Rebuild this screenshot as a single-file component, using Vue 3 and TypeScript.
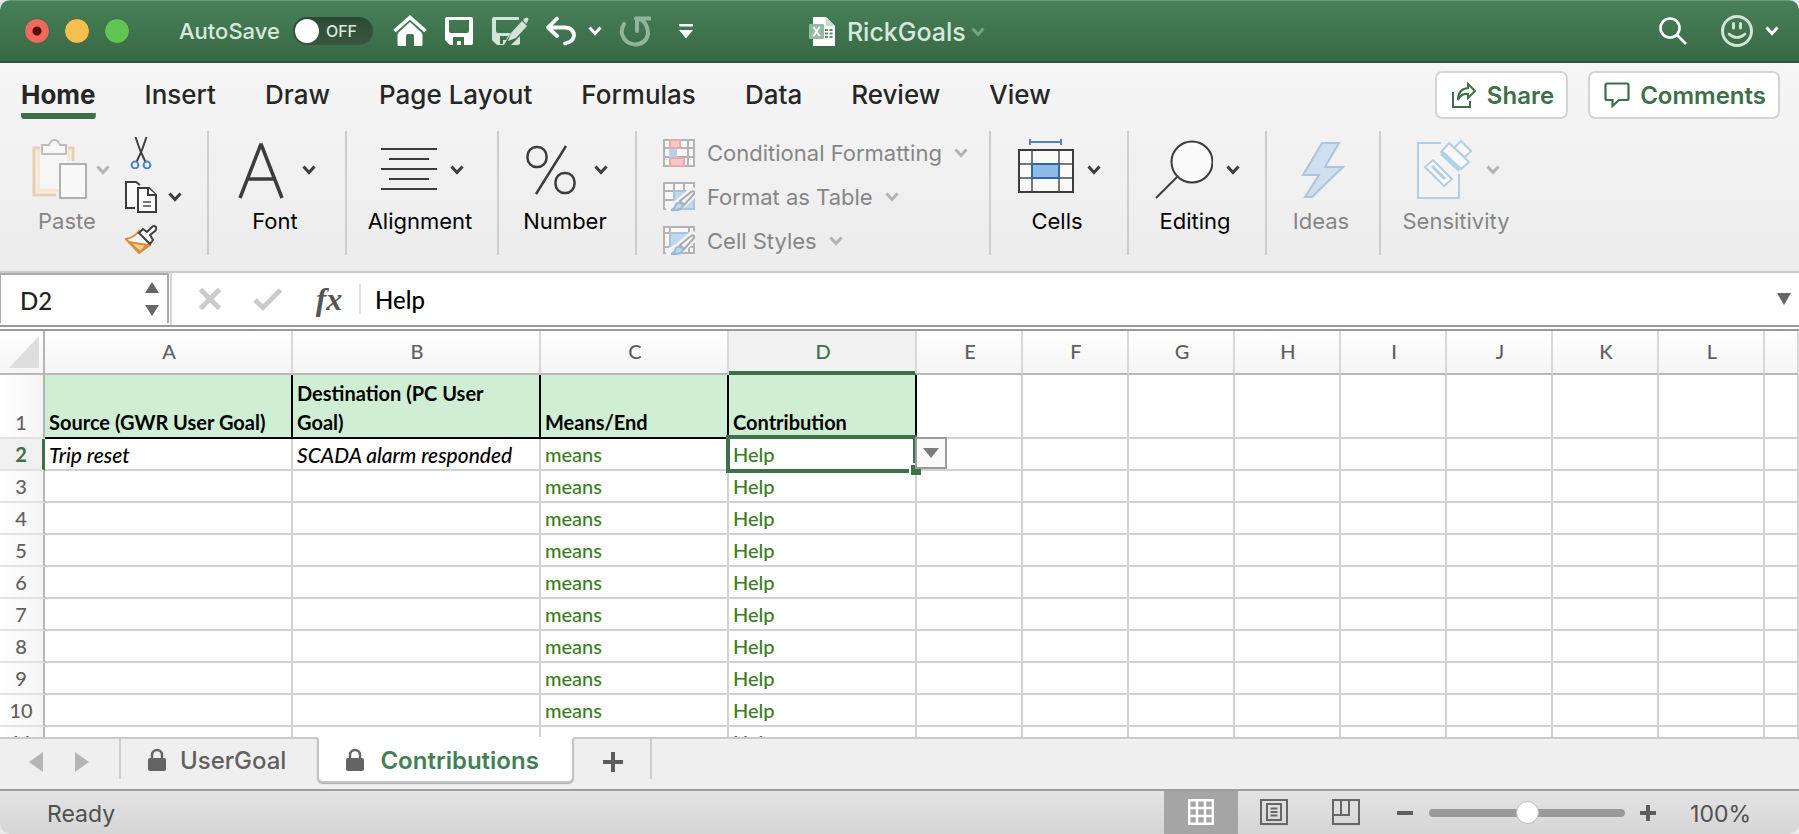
<script setup lang="ts">
import { h, ref } from 'vue'

interface Row { n: number; source?: string; destination?: string }

const autoSave = ref(false)
const cellRef = ref('D2')
const formula = ref('Help')
const zoom = ref(100)

const menus = ['Home', 'Insert', 'Draw', 'Page Layout', 'Formulas', 'Data', 'Review', 'View']
const columns = ['A', 'B', 'C', 'D', 'E', 'F', 'G', 'H', 'I', 'J', 'K', 'L', '']
const emptyColumns = columns.slice(4)
const rows: Row[] = Array.from({ length: 10 }, (_, i) => ({ n: i + 2 }))
rows[0].source = 'Trip reset'
rows[0].destination = 'SCADA alarm responded'

const Chevron = () =>
  h('svg', { width: 14, height: 10, viewBox: '0 0 14 10', fill: 'none', stroke: 'currentColor', 'stroke-width': 3, 'aria-hidden': 'true' }, [
    h('path', { d: 'M1.5 1.5 7 7.5 12.5 1.5' }),
  ])

const Lock = () =>
  h('svg', { width: 20, height: 24, viewBox: '0 0 20 24', 'aria-hidden': 'true' }, [
    h('path', { d: 'M5 11V7a5 5 0 0 1 10 0v4', fill: 'none', stroke: '#646464', 'stroke-width': 2.4 }),
    h('rect', { x: 1, y: 10, width: 18, height: 13, rx: 2, fill: '#646464' }),
  ])
</script>

<template>
  <div class="window">
    <header class="titlebar">
      <div class="lights">
        <button class="light close" aria-label="Close"></button>
        <button class="light minimise" aria-label="Minimise"></button>
        <button class="light expand" aria-label="Full screen"></button>
      </div>
      <label class="autosave">
        <span>AutoSave</span>
        <input v-model="autoSave" type="checkbox" class="sr" />
        <span class="toggle"><span class="knob"></span><span>OFF</span></span>
      </label>
      <div class="quick">
        <button aria-label="Home">
          <svg width="34" height="32" viewBox="0 0 34 32"><path d="M17 5.500 29.500 18V29.500Q29.500 31 28 31H21V21Q21 19 19 19H15Q13 19 13 21V31H6Q4.500 31 4.500 29.500V18Z" fill="#fff" /><path d="M1.500 16.500 17 2 32.500 16.500" fill="none" stroke="#3f7b50" stroke-width="8" /><path d="M5 18 17 7 29 18" fill="#fff" /><path d="M1.500 16 17 2.500 32.500 16" fill="none" stroke="#fff" stroke-width="3.600" /></svg>
        </button>
        <button aria-label="Save">
          <svg width="30" height="30" viewBox="0 0 30 30"><path fill="#fff" fill-rule="evenodd" d="M3 1H27Q29 1 29 3V27Q29 29 27 29H6L1 24V3Q1 1 3 1ZM5 4V15Q5 17 7 17H23Q25 17 25 15V4ZM9 21V29H13V25H17V29H20V21Z" /></svg>
        </button>
        <button aria-label="Save As">
          <svg width="38" height="30" viewBox="0 0 38 30"><path fill="#d3e3d6" fill-rule="evenodd" d="M3 1H28V4H5V15Q5 17 7 17H20L13 29H6L1 24V3Q1 1 3 1ZM9 20V28H12V24H15L17 20ZM20 29 29 20V27Q29 29 27 29Z" /><path fill="#d3e3d6" d="m17 25 3-8L31 5l5 5-11 12zM32 4l2-2q2-1 3 0 1 1 0 3l-2 3z" /></svg>
        </button>
        <button class="undo" aria-label="Undo">
          <svg width="32" height="30" viewBox="0 0 32 30" fill="none" stroke="#fff" stroke-width="3.800" stroke-linecap="round" stroke-linejoin="round"><path d="M12 2.500 3 11.500 12 20M4 11.500H20Q29 12 29 20 28 26 20 27.500" /></svg>
          <Chevron />
        </button>
        <button aria-label="Redo">
          <svg width="32" height="32" viewBox="0 0 32 32" fill="none" stroke="#8fb59a" stroke-width="4"><path d="M5 9Q2 14 3 19 6 29 16 29.500 27 29 29 19 29 10 23 5L17 3.500M18 16V3.500H31" stroke-linecap="round" /></svg>
        </button>
        <button class="customise" aria-label="Customise toolbar">
          <svg width="16" height="16" viewBox="0 0 16 16" fill="#fff"><path d="M1 1H15V3.500H1ZM1 7H15L8 15.500Z" /></svg>
        </button>
      </div>
      <button class="doc">
        <svg width="28" height="30" viewBox="0 0 28 30"><path d="M5 0H18L27 9V29H5Z" fill="#fff" /><path d="M18 0V9H27Z" fill="#c9dccd" /><path d="M17 12h3v2h-3zM21.500 12h3v2h-3zM17 15.500h3v2h-3zM21.500 15.500h3v2h-3zM17 19h3v2h-3zM21.500 19h3v2h-3z" fill="#5c8c69" /><rect x="1" y="7" width="15" height="15" rx="1" fill="#94bb9f" /><path d="m5.500 10 6 9M11.500 10l-6 9" stroke="#fff" stroke-width="2" /></svg>
        <span>RickGoals</span>
        <Chevron class="faint" />
      </button>
      <div class="account">
        <button aria-label="Search">
          <svg width="30" height="30" viewBox="0 0 30 30" fill="none" stroke="#fff" stroke-width="2.600"><circle cx="12" cy="12" r="9.500" /><path d="M19 19 28 28" /></svg>
        </button>
        <button class="smile" aria-label="Feedback">
          <svg width="34" height="34" viewBox="0 0 34 34" fill="none" stroke="#d3e3d6" stroke-width="3"><circle cx="17" cy="17" r="14.500" /><path d="M13.500 9.500V14M20.500 9.500V14" stroke-linecap="round" /><path d="M9 20Q17 27 25 20" stroke-width="2.600" stroke-linecap="round" /></svg>
          <Chevron />
        </button>
      </div>
    </header>

    <section class="ribbon">
      <div class="menu-row">
        <nav>
          <button v-for="m in menus" :key="m" :class="{ current: m === 'Home' }">{{ m }}</button>
        </nav>
        <div class="actions">
          <button class="share">
            <svg width="26" height="28" viewBox="0 0 26 28" fill="none" stroke="#3d7048" stroke-width="2"><path d="M2 11V26H19V20" /><path d="M17 3 24 10 17 17V13Q10 12 7 19 7 8 17 7Z" /></svg>
            Share
          </button>
          <button class="comments">
            <svg width="26" height="26" viewBox="0 0 26 26" fill="none" stroke="#3d7048" stroke-width="2.200"><path d="M3 1.500H23Q24.500 1.500 24.500 3V16.500Q24.500 18 23 18H15L8.500 24V18H3Q1.500 18 1.500 16.500V3Q1.500 1.500 3 1.500Z" /></svg>
            Comments
          </button>
        </div>
      </div>

      <div class="groups">
        <div class="group clipboard">
          <button class="tool off" disabled>
            <span class="face">
              <svg width="56" height="62" viewBox="0 0 56 62"><path d="M8 9H2V56H24M36 9H41V22" fill="none" stroke="#e9cfb2" stroke-width="3" /><path d="M5 11H38V22H27V53H5Z" fill="#f6e8cf" /><path d="M8 12H35V24H27V50H8Z" fill="#f6f6f6" /><path d="M10 6H17Q19 1 22 1 26 1 28 6H34V15H10Z" fill="#f7f7f7" stroke="#bdbdbd" stroke-width="2" /><rect x="28" y="25" width="26" height="34" fill="#f8f8f8" stroke="#b0b0b0" stroke-width="2" /></svg>
              <Chevron />
            </span>
            <span>Paste</span>
          </button>
          <div class="stack">
            <button aria-label="Cut">
              <svg width="32" height="32" viewBox="0 0 32 32" fill="none"><path d="M10.500 0 15 13 20.500 25M21.500 0 17 13 11.500 25" stroke="#404040" stroke-width="2" /><circle cx="10" cy="28" r="3.400" stroke="#4386c4" stroke-width="2" /><circle cx="22" cy="28" r="3.400" stroke="#4386c4" stroke-width="2" /></svg>
            </button>
            <button aria-label="Copy">
              <svg width="32" height="32" viewBox="0 0 32 32" fill="#fafafa" stroke="#3c3c3c" stroke-width="2"><path d="M10 27H1V1H11L15 4" /><path d="M13 7H24L31 14V31H13Z" /><path d="M23 7V14H31" /><path d="M18 21H26M18 25H26" stroke="#777" /></svg>
              <Chevron />
            </button>
            <button aria-label="Format painter">
              <svg width="32" height="30" viewBox="0 0 32 30" fill="#fafafa" stroke-width="2"><path d="M14 6Q10 12 1 14L14 28 25 20Z" stroke="#dc8a3e" /><path d="M4 17 15 27 22 20Z" fill="#f8d193" stroke="#dc8a3e" /><path d="M14 8 18 4 22 7 27 2Q29 0 31 2 32 4 30 6L25 10 28 15 25 19Z" stroke="#404040" /></svg>
            </button>
          </div>
        </div>

        <div class="group g-font">
          <button class="tool">
            <span class="face roomy">
              <svg width="46" height="58" viewBox="0 0 46 58" fill="none" stroke="#3c3c3c" stroke-width="3.500"><path d="M2 57 23 3 44 57M9 38H37" stroke-linejoin="bevel" /></svg>
              <Chevron />
            </span>
            <span>Font</span>
          </button>
        </div>
        <div class="group g-align">
          <button class="tool">
            <span class="face">
              <svg width="56" height="58" viewBox="0 0 56 58" stroke="#3c3c3c" stroke-width="2"><path d="M0 8H56M8 18H48M0 28H56M8 38H48M0 48H56" /></svg>
              <Chevron />
            </span>
            <span>Alignment</span>
          </button>
        </div>
        <div class="group g-number">
          <button class="tool">
            <span class="face roomy">
              <svg width="50" height="58" viewBox="0 0 50 58" fill="none" stroke="#3c3c3c" stroke-width="2.500"><path d="M40 5 10 53" /><rect x="1.500" y="6" width="19" height="20" rx="9" /><rect x="29.500" y="32" width="19" height="20" rx="9" /></svg>
              <Chevron />
            </span>
            <span>Number</span>
          </button>
        </div>

        <div class="group formats">
          <button disabled>
            <svg width="32" height="28" viewBox="0 0 32 28" fill="#f8f8f8"><path d="M1 1H31V27H1ZM1 9H31M1 18H31M7 1V27M25 1V27" stroke="#b3b3b3" stroke-width="2" /><path d="M7 1H17V9H7ZM7 19H21V27H7Z" fill="#f5c9c9" stroke="#e8abab" stroke-width="2" /><path d="M6 10H14V18H6Z" fill="#b7d0ec" /></svg>
            <span>Conditional Formatting</span><Chevron />
          </button>
          <button disabled>
            <svg width="32" height="30" viewBox="0 0 32 30"><path d="M1 1H31V27H1ZM1 9H31M1 18H31M11 1V27M21 1V27" fill="#f8f8f8" stroke="#b3b3b3" stroke-width="2" /><path d="M11 9H31V27H11Z" fill="#c0d8ee" stroke="#a9c3dd" stroke-width="2" /><path d="M33 8 17 22 4 29" stroke="#f4f4f4" stroke-width="11" fill="none" /><path d="M17 19 28 10Q32 8 31 12L21 23Z" fill="#f6f6f6" stroke="#aaa" stroke-width="2" /><path d="M8 28Q12 27 13 22 16 19 20 23 20 29 8 28Z" fill="#c0d8ee" stroke="#9ab8d6" stroke-width="2" /></svg>
            <span>Format as Table</span><Chevron />
          </button>
          <button disabled>
            <svg width="32" height="30" viewBox="0 0 32 30"><path d="M1 1H31V27H1ZM1 7H31M1 21H31M7 1V27M26 1V27" fill="#f8f8f8" stroke="#b3b3b3" stroke-width="2" /><path d="M7 7H26V21H7Z" fill="#c0d8ee" stroke="#a9c3dd" stroke-width="2" /><path d="M33 8 17 22 4 29" stroke="#f4f4f4" stroke-width="11" fill="none" /><path d="M17 19 28 10Q32 8 31 12L21 23Z" fill="#f6f6f6" stroke="#aaa" stroke-width="2" /><path d="M8 28Q12 27 13 22 16 19 20 23 20 29 8 28Z" fill="#c0d8ee" stroke="#9ab8d6" stroke-width="2" /></svg>
            <span>Cell Styles</span><Chevron />
          </button>
        </div>

        <div class="group g-cells">
          <button class="tool">
            <span class="face">
              <svg width="56" height="62" viewBox="0 0 56 62" fill="none"><path d="M12 3H43M12 0V6M43 0V6" stroke="#4c87bd" stroke-width="2" /><path d="M1 11H55V53H1Z" fill="#fafafa" /><path d="M14 11V53M41 11V53M1 25H55M1 39H55" stroke="#777" stroke-width="2" /><path d="M1 11H55V53H1Z" stroke="#3c3c3c" stroke-width="2" /><path d="M14 25H41V39H14Z" fill="#8fbbe8" stroke="#2f66ac" stroke-width="2" /></svg>
              <Chevron />
            </span>
            <span>Cells</span>
          </button>
        </div>
        <div class="group g-editing">
          <button class="tool">
            <span class="face">
              <svg width="58" height="60" viewBox="0 0 58 60" stroke="#3c3c3c" stroke-width="2"><circle cx="37" cy="22" r="20.500" fill="#fafafa" /><path d="M22 37 1 58" /></svg>
              <Chevron />
            </span>
            <span>Editing</span>
          </button>
        </div>
        <div class="group g-ideas">
          <button class="tool off" disabled>
            <span class="face">
              <svg width="44" height="58" viewBox="0 0 44 58"><path d="M21 2H38L24 26H42L11 56H4L18 34H2Z" fill="#cfdfef" stroke="#adc4db" stroke-width="2" /></svg>
            </span>
            <span>Ideas</span>
          </button>
        </div>
        <div class="group g-sensitivity">
          <button class="tool off" disabled>
            <span class="face">
              <svg width="56" height="62" viewBox="0 0 56 62" fill="none" stroke="#b2cfe3" stroke-width="2"><path d="M24 4H1V59H42V35" fill="#f4f4f4" /><path d="m8 28 8-7 19 19-8 7Z" fill="#f8f8f8" /><path d="M15 27 28 40" stroke-width="3" /><path d="M37 9 44 2 54 12 48 18Z" fill="#f8f8f8" /><path d="m24 13 8-9 20 19-8 7Z" fill="#f8f8f8" /><path d="M25 14 43 31" stroke-width="5" /></svg>
              <Chevron />
            </span>
            <span>Sensitivity</span>
          </button>
        </div>
      </div>
    </section>

    <section class="formula-bar">
      <div class="namebox">
        <input v-model="cellRef" aria-label="Name box" />
        <svg width="16" height="36" viewBox="0 0 16 36" fill="#666"><path d="M1 11H15L8 0ZM1 23H15L8 34Z" /></svg>
      </div>
      <div class="edit">
        <button aria-label="Cancel" disabled><svg width="24" height="24" viewBox="0 0 24 24" stroke="#cbcbcb" stroke-width="5"><path d="M2.500 2.500 21.500 21.500M21.500 2.500 2.500 21.500" /></svg></button>
        <button aria-label="Enter" disabled><svg width="30" height="24" viewBox="0 0 30 24" fill="none" stroke="#cbcbcb" stroke-width="5"><path d="M2 13 10 20.500 27.500 3" /></svg></button>
        <button class="fx" aria-label="Insert function">fx</button>
        <input v-model="formula" aria-label="Formula" />
        <button aria-label="Expand formula bar"><svg width="14" height="12" viewBox="0 0 14 12" fill="#666"><path d="M0 0H14L7 12Z" /></svg></button>
      </div>
    </section>

    <main class="sheet">
      <table>
        <colgroup>
          <col class="c-num" /><col class="c-wide" /><col class="c-wide" /><col class="c-mid" /><col class="c-mid" />
          <col v-for="i in 8" :key="i" class="c-std" /><col />
        </colgroup>
        <thead>
          <tr>
            <th class="corner"><svg width="30" height="32" viewBox="0 0 30 32"><path d="M30 0V32H0Z" fill="#dedede" /></svg></th>
            <th v-for="(c, i) in columns" :key="i" scope="col" :class="{ picked: c === 'D' }">{{ c }}</th>
          </tr>
        </thead>
        <tbody>
          <tr class="titles">
            <th scope="row">1</th>
            <td class="title">Source (GWR User Goal)</td>
            <td class="title">Destination (PC User Goal)</td>
            <td class="title">Means/End</td>
            <td class="title">Contribution</td>
            <td v-for="(c, i) in emptyColumns" :key="i"></td>
          </tr>
          <tr v-for="r in rows" :key="r.n" :class="{ active: r.n === 2 }">
            <th scope="row">{{ r.n }}</th>
            <td class="goal">{{ r.source }}</td>
            <td class="goal">{{ r.destination }}</td>
            <td class="link">means</td>
            <td class="link" :class="{ selected: r.n === 2 }">
              Help
              <template v-if="r.n === 2">
                <span class="frame"></span><span class="handle"></span>
                <button class="pick" aria-label="Choose contribution"><svg width="16" height="10" viewBox="0 0 16 10"><path d="M0 0H16L8 10Z" fill="#7d7d7d" /></svg></button>
              </template>
            </td>
            <td v-for="(c, i) in emptyColumns" :key="i"></td>
          </tr>
        </tbody>
      </table>
    </main>

    <nav class="tabs">
      <div class="arrows">
        <button aria-label="Previous sheet"><svg width="14" height="20" viewBox="0 0 14 20"><path d="M14 0V20L0 10Z" fill="#b5b5b5" /></svg></button>
        <button aria-label="Next sheet"><svg width="14" height="20" viewBox="0 0 14 20"><path d="M0 0V20L14 10Z" fill="#b5b5b5" /></svg></button>
      </div>
      <button class="tab"><Lock />UserGoal</button>
      <button class="tab front"><Lock />Contributions</button>
      <button class="add" aria-label="New sheet"><svg width="20" height="20" viewBox="0 0 20 20" stroke="#5c5c5c" stroke-width="4"><path d="M10 0V20M0 10H20" /></svg></button>
      <div class="rest"></div>
    </nav>

    <footer class="status">
      <span class="ready">Ready</span>
      <button class="view on" aria-label="Normal view">
        <svg width="26" height="26" viewBox="0 0 26 26" fill="none" stroke="#fff" stroke-width="2.400"><path d="M1.200 1.200H24.800V24.800H1.200ZM9 1V25M17 1V25M1 9H25M1 17H25" /></svg>
      </button>
      <button class="view" aria-label="Page layout view">
        <svg width="28" height="26" viewBox="0 0 28 26" fill="none" stroke="#666" stroke-width="2"><path d="M1 1H27V25H1ZM7 5H21V21H7ZM10.500 9.500H17.500M10.500 13H17.500M10.500 16.500H17.500" /></svg>
      </button>
      <button class="view" aria-label="Page break preview">
        <svg width="28" height="26" viewBox="0 0 28 26" fill="none" stroke="#666" stroke-width="2"><path d="M1 1H27V25H1ZM1 16H17V1M9 1V16" /></svg>
      </button>
      <button class="step" aria-label="Zoom out"><svg width="16" height="16" viewBox="0 0 16 16" stroke="#5e5e5e" stroke-width="4"><path d="M0 8H16" /></svg></button>
      <input v-model="zoom" type="range" min="0" max="200" aria-label="Zoom" />
      <button class="step" aria-label="Zoom in"><svg width="16" height="16" viewBox="0 0 16 16" stroke="#5e5e5e" stroke-width="4"><path d="M0 8H16M8 0V16" /></svg></button>
      <span class="percent">100%</span>
    </footer>
  </div>
</template>

<style>
html, body, #app { height: 100%; }
body { margin: 0; background: #e9e9e9; }
</style>

<style scoped>
* { box-sizing: border-box; }
svg { display: block; flex: none; }
button { border: 0; background: none; padding: 0; margin: 0; font: inherit; color: inherit; display: flex; align-items: center; justify-content: center; }
input { font: inherit; color: inherit; border: 0; margin: 0; padding: 0; background: none; outline: 0; }
.window { height: 100vh; display: flex; flex-direction: column; border-radius: 10px; overflow: hidden; background: #fff; font-family: Inter, Roboto, sans-serif; font-size: 22px; color: #000; }

.titlebar { flex: none; height: 63px; display: flex; align-items: center; background: linear-gradient(#488159, #376844); border-top: 1px solid #6b9a79; border-bottom: 2px solid #2d5438; color: #d9e8dc; }
.lights { display: flex; gap: 14px; padding-left: 24px; }
.light { width: 26px; height: 26px; border-radius: 50%; border: 1px solid #3f6b41; }
.close { background: radial-gradient(circle, #5c0b06 0 4px, #ec6a5e 5px); }
.minimise { background: #f5bf4f; }
.expand { background: #61c554; }
.autosave { position: relative; display: flex; align-items: center; gap: 13px; margin-left: 49px; font-weight: 500; }
.sr { position: absolute; opacity: 0; width: 80px; height: 28px; right: 0; }
.toggle { width: 80px; height: 28px; border-radius: 14px; background: linear-gradient(#2b4a35, #38563f); display: flex; align-items: center; gap: 7px; padding: 0 2px; font-size: 16px; font-weight: 500; }
.knob { width: 24px; height: 24px; border-radius: 50%; background: #fff; }
.quick { display: flex; align-items: center; margin-left: 20px; gap: 17px; color: #fff; }
.undo { gap: 11px; margin-left: -1px; }
.customise { margin-left: 10px; }
.doc { gap: 11px; margin-left: 114px; font-size: 25px; font-weight: 500; padding-top: 2px; }
.doc .faint { color: #76a284; margin-left: -6px; }
.account { display: flex; align-items: center; gap: 32px; margin-left: auto; padding-right: 20px; color: #fff; }
.smile { gap: 11px; }

.ribbon { flex: none; height: 210px; background: linear-gradient(#f6f6f6, #ececec); border-bottom: 2px solid #c9c9c9; display: flex; flex-direction: column; }
.menu-row { display: flex; justify-content: space-between; align-items: flex-start; padding: 8px 19px 0 21px; height: 68px; flex: none; }
.menu-row nav { display: flex; gap: 49px; font-size: 26px; font-weight: 500; color: #262626; padding-top: 6px; }
.menu-row nav button { height: 42px; padding-bottom: 7px; white-space: nowrap; }
.menu-row nav .current { font-weight: 700; background: linear-gradient(#3d7048, #3d7048) bottom / 100% 6px no-repeat; border-radius: 0 0 3px 3px; }
.actions { display: flex; gap: 20px; font-size: 24px; font-weight: 600; color: #3d7048; }
.actions button { height: 48px; background: #fff; border: 2px solid #d4d4d4; border-radius: 7px; gap: 10px; padding: 0 12px 0 14px; }

.groups { display: flex; height: 124px; }
.group { border-right: 2px solid #cdcdcd; display: flex; justify-content: center; flex: none; }
.g-sensitivity { border: 0; }
.tool { flex-direction: column; justify-content: flex-start; padding-top: 8px; }
.tool > span:last-child { line-height: 24px; margin-top: 8px; padding-right: 4px; }
.face { display: flex; align-items: center; height: 62px; gap: 13px; color: #3c3c3c; }
.face.roomy { gap: 18px; }
.tool.off, .tool.off .face { color: #868686; }
.off .face svg:last-child:not(:first-child), .formats svg:last-child { color: #b3b3b3; }
.clipboard { width: 209px; justify-content: flex-start; padding-left: 32px; gap: 15px; }
.clipboard .face { gap: 8px; }
.clipboard .tool > span:last-child { align-self: flex-start; margin-left: 6px; }
.stack { display: flex; flex-direction: column; gap: 12px; padding-top: 6px; color: #3c3c3c; align-items: flex-start; }
.stack button { gap: 11px; }
.g-font, .g-number, .g-cells, .g-editing { width: 138px; }
.g-align { width: 152px; }
.g-ideas { width: 114px; }
.g-sensitivity { width: 154px; }
.formats { width: 354px; flex-direction: column; justify-content: flex-start; align-items: flex-start; gap: 16px; padding: 8px 0 0 26px; }
.formats button { height: 28px; gap: 12px; color: #868686; }

.formula-bar { flex: none; height: 58px; display: flex; font-family: Lato, "Open Sans", sans-serif; font-size: 24px; font-weight: 500; border-bottom: 6px double #999; background: #fff; }
.namebox { width: 169px; border: 2px solid #ababab; border-width: 2px 2px 0 1px; display: flex; align-items: center; padding: 2px 7px 0 19px; margin-bottom: 2px; color: #222; }
.namebox input { flex: 1; min-width: 0; }
.edit { flex: 1; display: flex; align-items: center; border-left: 2px solid #d4d4d4; margin-left: 1px; padding: 0 8px 0 26px; gap: 31px; }
.fx { font-family: "Liberation Serif", serif; font-style: italic; font-weight: 700; font-size: 32px; line-height: 32px; color: #555; width: 30px; }
.edit input { flex: 1; min-width: 0; height: 30px; border-left: 2px solid #e2e2e2; padding-left: 14px; margin-left: -16px; }

.sheet { flex: 1; min-height: 0; overflow: hidden; font-family: Lato, "Open Sans", sans-serif; font-size: 20px; font-weight: 500; }
table { width: 100%; table-layout: fixed; border-collapse: separate; border-spacing: 0; }
.c-num { width: 45px; } .c-wide { width: 248px; } .c-mid { width: 188px; } .c-std { width: 106px; }
th, td { padding: 1px 0 0; height: 32px; border-right: 2px solid #d2d2d2; border-bottom: 2px solid #d2d2d2; line-height: 29px; white-space: nowrap; }
th { font-weight: 500; color: #606060; text-align: center; }
thead th { height: 44px; background: linear-gradient(#fff, #f5f5f5); border-bottom-color: #b8b8b8; border-right-color: #d8d8d8; padding: 0 0 2px 2px; }
thead th.corner { border-right-color: #b5b5b5; padding: 0 4px 0 9px; }
thead th.picked { background: #f1f1f1; color: #3d7048; box-shadow: inset 0 -2px #3d7048; border-bottom-color: #3d7048; }
tbody th { border-right-color: #b5b5b5; background: linear-gradient(90deg, #fff, #f5f5f5); border-bottom-color: #e2e2e2; padding-right: 1px; }
td { padding: 1px 4px 0; text-align: left; }
.titles th, .titles td { height: 64px; vertical-align: bottom; }
.titles .title { white-space: normal; background: #cfeed3; font-weight: 700; border-color: #000; padding-right: 16px; }
.active th { color: #3d7048; background: #f0f0f0; border-right: 3px solid #3d7048; font-weight: 700; padding-right: 0; }
.goal { font-style: italic; font-size: 21px; }
.link { color: #3a7d24; }
.selected { position: relative; }
.frame { position: absolute; inset: -4px -2px -4px -3px; border: 4px solid #3f7049; }
.handle { position: absolute; right: -6px; bottom: -6px; width: 12px; height: 12px; background: #3f7049; border: 2px solid #fff; border-width: 2px 0 0 2px; }
.pick { position: absolute; left: 100%; top: -2px; width: 32px; height: 32px; background: #fafafa; border: 2px solid #9b9b9b; }

.tabs { flex: none; height: 54px; display: flex; align-items: stretch; background: #efefef; border-bottom: 2px solid #9d9d9d; font-size: 24px; font-weight: 500; color: #616161; }
.arrows, .tab, .add, .rest { border-top: 2px solid #cacaca; padding-bottom: 4px; }
.arrows { width: 119px; display: flex; gap: 32px; padding-left: 29px; }
.tab { padding: 0 31px 8px 28px; gap: 13px; background: linear-gradient(#cdcdcd, #cdcdcd) left top / 2px 40px no-repeat; }
.tab.front { height: 46px; padding: 0 33px 0 26px; gap: 15px; border: 2px solid #c4c4c4; border-top-color: #fff; background: #fff; border-radius: 0 0 6px 6px; color: #437f55; font-weight: 600; box-shadow: 0 1px 1px #aaa; }
.add { padding: 0 27px 4px 29px; }
.rest { flex: 1; background: linear-gradient(#cdcdcd, #cdcdcd) left top / 2px 40px no-repeat; }

.status { flex: none; height: 43px; display: flex; align-items: stretch; background: linear-gradient(#e4e4e4, #d5d5d5); color: #505050; font-size: 23px; }
.ready { margin: auto auto auto 47px; padding-top: 2px; }
.view { width: 72px; padding-bottom: 1px; }
.view.on { background: #a5a5a5; width: 74px; }
.step { width: 16px; margin-left: 15px; }
.status input { appearance: none; width: 196px; height: 24px; margin: auto 0 auto 16px; }
.status input::-webkit-slider-runnable-track { height: 8px; border-radius: 4px; background: #9a9a9a; }
.status input::-webkit-slider-thumb { appearance: none; width: 23px; height: 23px; margin-top: -8px; border-radius: 50%; background: #fff; border: 1px solid #bdbdbd; }
.percent { margin: auto 48px auto 34px; padding-top: 2px; }
</style>
